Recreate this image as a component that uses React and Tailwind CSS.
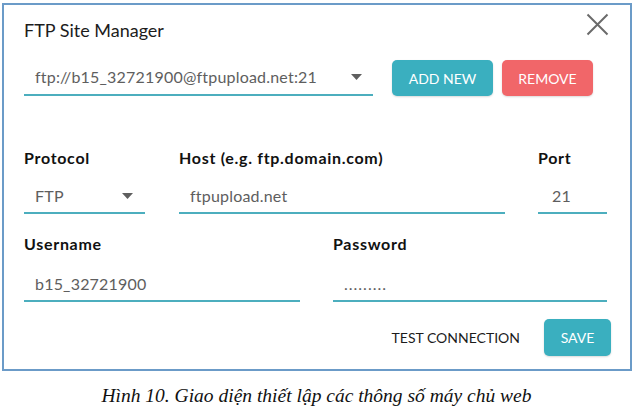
import React from "react";

const font = { fontFamily: "Lato, 'Open Sans', sans-serif" };

const Caret = () => (
  <svg width="11" height="6" viewBox="0 0 11 6" className="shrink-0">
    <path d="M0 0 L11 0 L5.5 6 Z" fill="#5f5f5f" />
  </svg>
);

const Field = ({ width, children, className = "" }) => (
  <div
    className={`flex items-center h-[34px] border-b-2 border-[#4caebe] pl-[11px] text-[16px] tracking-[0.2px] text-[#5e5e5e] ${width} ${className}`}
  >
    {children}
  </div>
);

const Label = ({ children, width }) => (
  <div className={`text-[16px] font-bold tracking-[0.7px] text-[#111] leading-[20px] ${width}`}>
    {children}
  </div>
);

const App = () => {
  return (
    <div className="w-[633px] h-[411px] bg-white" style={font}>
      <div className="ml-[2px] mt-[3px] w-[630px] h-[368px] border-2 border-[#6b9bc8] pl-[20px] pr-[18px]">
        {/* Header */}
        <div className="flex justify-between items-start pt-[13px]">
          <h1 className="text-[18px] leading-[24px] text-[#1c1c1c] font-normal">
            FTP Site Manager
          </h1>
          <svg width="23" height="23" viewBox="0 0 23 23" className="mt-[-5px] mr-[3px]">
            <path d="M1.5 1.5 L21.5 21.5 M21.5 1.5 L1.5 21.5" stroke="#6a6a6a" strokeWidth="2" />
          </svg>
        </div>

        {/* Site select + buttons */}
        <div className="flex items-start mt-[18px]">
          <div className="w-[349px] h-[36px] flex items-center justify-between border-b-2 border-[#4caebe] pl-[11px] pr-[11px] text-[16px] tracking-[0.2px] text-[#5e5e5e]">
            <span>ftp://b15_32721900@ftpupload.net:21</span>
            <Caret />
          </div>
          <button className="ml-[19px] w-[101px] h-[36px] rounded-[5px] bg-[#3aafbf] text-white text-[14px] shadow-[0_1px_2px_rgba(0,0,0,0.15)]">
            ADD NEW
          </button>
          <button className="ml-[9px] w-[91px] h-[36px] rounded-[5px] bg-[#f16669] text-white text-[14px] shadow-[0_1px_2px_rgba(0,0,0,0.15)]">
            REMOVE
          </button>
        </div>

        {/* Protocol / Host / Port */}
        <div className="flex mt-[52px]">
          <Label width="w-[121px]">Protocol</Label>
          <div className="w-[34px]" />
          <Label width="w-[326px]">Host (e.g. ftp.domain.com)</Label>
          <div className="w-[33px]" />
          <Label width="w-[69px]">Port</Label>
        </div>
        <div className="flex mt-[12px]">
          <Field width="w-[121px]" className="justify-between pr-[12px]">
            <span>FTP</span>
            <Caret />
          </Field>
          <div className="w-[34px]" />
          <Field width="w-[326px]">ftpupload.net</Field>
          <div className="w-[33px]" />
          <Field width="w-[69px]" className="pl-[14px]">21</Field>
        </div>

        {/* Username / Password */}
        <div className="flex mt-[20px]">
          <Label width="w-[276px]">Username</Label>
          <div className="w-[33px]" />
          <Label width="w-[274px]">Password</Label>
        </div>
        <div className="flex mt-[14px]">
          <Field width="w-[276px]">b15_32721900</Field>
          <div className="w-[33px]" />
          <Field width="w-[274px]" className="text-[11px] tracking-[1px]">
            .........
          </Field>
        </div>

        {/* Footer actions */}
        <div className="flex justify-end items-center mt-[17px] mr-[1px]">
          <span className="text-[14px] text-[#1c1c1c]">TEST CONNECTION</span>
          <button className="ml-[24px] w-[67px] h-[37px] rounded-[5px] bg-[#3aafbf] text-white text-[14px] shadow-[0_1px_2px_rgba(0,0,0,0.15)]">
            SAVE
          </button>
        </div>
      </div>

      <p
        className="mt-[10px] text-center text-[19.5px] italic text-[#111]"
        style={{ fontFamily: "'Liberation Serif', serif" }}
      >
        Hình 10. Giao diện thiết lập các thông số máy chủ web
      </p>
    </div>
  );
};

export default App;
